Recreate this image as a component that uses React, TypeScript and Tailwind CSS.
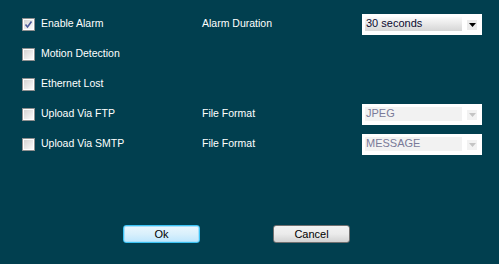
import React from 'react'

type Row = {
  label: string
  checked?: boolean
  right?: { label: string; value: string; disabled?: boolean }
}

const ROWS: Row[] = [
  { label: 'Enable Alarm', checked: true, right: { label: 'Alarm Duration', value: '30 seconds' } },
  { label: 'Motion Detection' },
  { label: 'Ethernet Lost' },
  { label: 'Upload Via FTP', right: { label: 'File Format', value: 'JPEG', disabled: true } },
  { label: 'Upload Via SMTP', right: { label: 'File Format', value: 'MESSAGE', disabled: true } },
]

function CheckBox({ checked }: { checked?: boolean }) {
  return (
    <div className="relative h-[13px] w-[13px] shrink-0 border border-[#8e8f8f] bg-white">
      <div className="absolute inset-[1px] bg-gradient-to-br from-[#d4d4d4] to-[#fbfbfb]" />
      {checked && (
        <svg className="absolute inset-0" width="11" height="11" viewBox="0 0 11 11">
          <path d="M2.5 5.5 L4.5 8 L8.5 2.5" fill="none" stroke="#4b5a9a" strokeWidth="1.6" />
        </svg>
      )}
    </div>
  )
}

function Select({ value, disabled }: { value: string; disabled?: boolean }) {
  return (
    <div className="flex h-[21px] w-[120px] items-start bg-white pl-[3px] pt-[3px]">
      <div
        className={`flex h-[14px] w-[97px] items-center pl-[1px] text-[11px] leading-none ${
          disabled
            ? 'bg-[#f2f2f2] text-[#7a7a99]'
            : 'bg-gradient-to-b from-[#fbfbfb] to-[#d6d6d6] text-[#0a0a30]'
        }`}
      >
        {value}
      </div>
      <div
        className={`ml-[5px] mt-[3px] flex h-[10px] w-[10px] items-center justify-center ${
          disabled ? 'bg-[#f2f2f2]' : 'bg-[#ececec]'
        }`}
      >
        <svg width="7" height="4" viewBox="0 0 7 4">
          <path d="M0 0 H7 L3.5 4 Z" fill={disabled ? '#c4c4c4' : '#000'} />
        </svg>
      </div>
    </div>
  )
}

export default function App() {
  return (
    <div
      className="flex h-[264px] w-[499px] flex-col bg-[#013f4f] pt-[9px] text-white"
      style={{ fontFamily: 'Tahoma, "Liberation Sans", Arial, sans-serif' }}
    >
      {ROWS.map((row) => (
        <div key={row.label} className="flex h-[30px] items-center pl-[22px] text-[10.5px]">
          <CheckBox checked={row.checked} />
          <span className="ml-[6px] w-[161px]">{row.label}</span>
          {row.right && (
            <>
              <span className="w-[160px]">{row.right.label}</span>
              <Select value={row.right.value} disabled={row.right.disabled} />
            </>
          )}
        </div>
      ))}

      <div className="mt-[66px] flex pl-[123px] text-[11px] text-black">
        <button
          type="button"
          className="h-[18px] w-[77px] rounded-[3px] border border-[#3cc3f5] bg-gradient-to-b from-[#eaf6fd] via-[#d9f0fc] to-[#bee6fd] shadow-[inset_0_0_0_1px_#a8e0fa]"
        >
          Ok
        </button>
        <button
          type="button"
          className="ml-[73px] h-[18px] w-[77px] rounded-[3px] border border-[#707070] bg-gradient-to-b from-[#f2f2f2] via-[#ebebeb] to-[#d2d2d2]"
        >
          Cancel
        </button>
      </div>
    </div>
  )
}
